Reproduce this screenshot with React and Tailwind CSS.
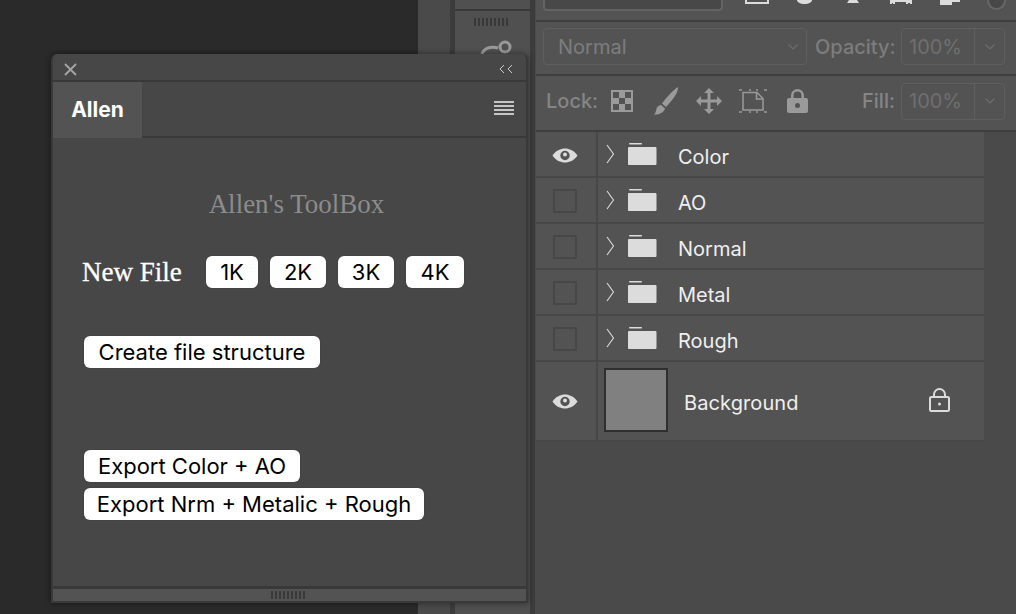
const sans = "font-['Inter','Liberation_Sans',sans-serif]";

function Chevron({ className = "" }) {
  return (
    <svg width="12" height="8" viewBox="0 0 12 8" className={className}>
      <path d="M1.5 1.5 6 6l4.500-4.500" fill="none" stroke="#6e6e6e" strokeWidth="1.200" />
    </svg>
  );
}

function Eye() {
  return (
    <svg width="26" height="15" viewBox="0 0 26 15">
      <path fillRule="evenodd" fill="#dcdcdc" d="M0.500 7.500C4 2.500 8.500 0.500 13 0.500S22 2.500 25.500 7.500C22 12.500 17.500 14.500 13 14.500S4 12.500 0.500 7.500ZM13 2.800a4.700 4.700 0 1 0 0 9.400a4.700 4.700 0 0 0 0-9.400Z" />
      <circle cx="13" cy="6.500" r="2" fill="#dcdcdc" />
    </svg>
  );
}

function Folder() {
  return (
    <svg width="29" height="22" viewBox="0 0 29 22">
      <rect x="1" y="0" width="13" height="1.500" rx="0.700" fill="#dcdcdc" />
      <path d="M1 4h26.500a1 1 0 0 1 1 1v16a1 1 0 0 1-1 1H1a1 1 0 0 1-1-1V5a1 1 0 0 1 1-1Z" fill="#dcdcdc" />
    </svg>
  );
}

function Disclosure() {
  return (
    <svg width="9" height="20" viewBox="0 0 9 20">
      <path d="M1 1l6.500 9L1 19" fill="none" stroke="#dcdcdc" strokeWidth="1.100" />
    </svg>
  );
}

function LayerRow({ name, visible }) {
  return (
    <div className="flex h-[46px] border-b-2 border-[#474747] bg-[#535353]">
      <div className="flex w-[62px] shrink-0 items-center justify-center border-r-2 border-[#474747] pr-[2px] pt-[2px]">
        {visible ? <Eye /> : <div className="h-[24px] w-[24px] rounded-[1px] border-2 border-[#474747]" />}
      </div>
      <div className="flex items-center pb-[1px] pl-[8px]">
        <Disclosure />
        <div className="ml-[13px]"><Folder /></div>
        <span className={`${sans} ml-[21px] mt-[6px] text-[20px] leading-none text-[#efefef]`}>{name}</span>
      </div>
    </div>
  );
}

function ValueField({ children }) {
  return (
    <div className="flex h-[37px] w-[104px] shrink-0 rounded-[4px] border border-[#5f5f5f]">
      <div className={`${sans} flex w-[73px] items-center border-r border-[#5f5f5f] pl-[7px] text-[20px] leading-none text-[#6f6f6f]`}>{children}</div>
      <div className="flex flex-1 items-center justify-center"><Chevron /></div>
    </div>
  );
}

function LockIcons() {
  return (
    <div className="ml-[13px] flex items-center gap-[19px]">
      <svg width="22" height="22" viewBox="0 0 22 22">
        <rect width="22" height="22" fill="#9a9a9a" />
        <rect x="2" y="2" width="6" height="6" fill="#535353" />
        <rect x="14" y="2" width="6" height="6" fill="#535353" />
        <rect x="8" y="8" width="6" height="6" fill="#535353" />
        <rect x="2" y="14" width="6" height="6" fill="#535353" />
        <rect x="14" y="14" width="6" height="6" fill="#535353" />
      </svg>
      <svg width="27" height="28" viewBox="0 0 27 28" fill="#9a9a9a">
        <path d="M26 0c.800 5-6 14-12 20l-4-3.500C15 10 21 3 26 0ZM9 18l4 3.500c-1 4-6 6.500-11.500 6 3-1.500 2-4 3.500-7 1-1.500 2.500-2.500 4-2.500Z" />
      </svg>
      <svg width="26" height="26" viewBox="0 0 26 26" fill="#9a9a9a" className="-ml-[2px]">
        <path d="M13 0l5 5h-3.500v6.500H21V8l5 5-5 5v-3.500h-6.500V21H18l-5 5-5-5h3.500v-6.500H5V18l-5-5 5-5v3.500h6.500V5H8Z" />
      </svg>
      <svg width="29" height="25" viewBox="0 0 29 25" fill="none" stroke="#9a9a9a" className="-ml-[2px]">
        <path d="M4 3.500h14l6 6v11.500H4Z" strokeWidth="1.500" />
        <path d="M17.500 3.500v6.500H24" strokeWidth="1.500" />
        <path d="M0 1h3M10 1h2M17 1h2M25 1h3M0 23h3M10 23h2M17 23h2M25 23h3" strokeWidth="1.500" />
      </svg>
      <svg width="21" height="24" viewBox="0 0 21 24" fill="#9a9a9a">
        <path fillRule="evenodd" d="M2 9h2V6.500a6.500 6.500 0 0 1 13 0V9h2a2 2 0 0 1 2 2v11a2 2 0 0 1-2 2H2a2 2 0 0 1-2-2V11a2 2 0 0 1 2-2Zm4.500 0h8V6.500a4 4 0 0 0-8 0ZM10.500 14a2.500 2.500 0 1 0 0 5a2.500 2.500 0 0 0 0-5Z" />
      </svg>
    </div>
  );
}

function WhiteButton({ children, className = "" }) {
  return (
    <button className={`${sans} flex h-[32px] items-center justify-center rounded-[6px] bg-white text-[22px] leading-none text-black shadow-[0_0_1px_#222] ${className}`}>
      {children}
    </button>
  );
}

function Grip({ className = "" }) {
  return (
    <div className={`flex gap-[2px] ${className}`}>
      {Array.from({ length: 9 }).map((_, i) => (
        <div key={i} className="h-[8px] w-[2px] bg-[#393939]" />
      ))}
    </div>
  );
}

function FloatingPanel() {
  return (
    <div className="absolute left-[51px] top-[54px] flex h-[549px] w-[477px] flex-col overflow-hidden rounded-t-[6px] border-2 border-t-0 border-[#393939] bg-[#474747] shadow-[0_0_6px_rgba(0,0,0,0.45)]">
      <div className="flex h-[28px] shrink-0 items-center justify-between border-b-2 border-[#393939] pl-[11px] pr-[13px] pt-[4px]">
        <svg width="13" height="13" viewBox="0 0 13 13">
          <path d="M1 1l11 11M12 1 1 12" stroke="#a5a5a5" strokeWidth="1.800" />
        </svg>
        <svg width="14" height="10" viewBox="0 0 14 10" fill="none" stroke="#c8c8c8" strokeWidth="1">
          <path d="M5 1 1 5l4 4M13 1 9 5l4 4" />
        </svg>
      </div>
      <div className="flex h-[56px] shrink-0">
        <div className={`${sans} flex w-[89px] items-center justify-center bg-[#535353] pb-[1px] text-[21px] font-bold leading-none text-white`}>
          Allen
        </div>
        <div className="flex flex-1 items-center justify-end border-b-2 border-[#393939] pb-[2px] pr-[12px]">
          <div className="flex flex-col gap-[2px]">
            <div className="h-[2px] w-[20px] bg-[#c5c5c5]" />
            <div className="h-[2px] w-[20px] bg-[#c5c5c5]" />
            <div className="h-[2px] w-[20px] bg-[#c5c5c5]" />
            <div className="h-[2px] w-[20px] bg-[#c5c5c5]" />
          </div>
        </div>
      </div>

      <div className="flex flex-1 flex-col">
        <h1 className="mt-[51px] pl-[14px] text-center font-['Liberation_Serif',serif] text-[27px] font-normal leading-[30px] text-[#8c8c8c]">
          Allen's ToolBox
        </h1>
        <div className="mt-[37px] flex items-center pl-[29px]">
          <span className="w-[124px] font-['Liberation_Serif',serif] text-[27px] leading-[32px] text-white [-webkit-text-stroke:0.3px_white]">New File</span>
          <div className="flex gap-[12px]">
            <WhiteButton className="w-[52px]">1K</WhiteButton>
            <WhiteButton className="w-[56px]">2K</WhiteButton>
            <WhiteButton className="w-[56px]">3K</WhiteButton>
            <WhiteButton className="w-[58px]">4K</WhiteButton>
          </div>
        </div>
        <WhiteButton className="ml-[31px] mt-[48px] w-[236px]">Create file structure</WhiteButton>
        <WhiteButton className="ml-[31px] mt-[82px] w-[216px]">Export Color + AO</WhiteButton>
        <WhiteButton className="ml-[31px] mt-[6px] w-[340px]">Export Nrm + Metalic + Rough</WhiteButton>
      </div>

      <div className="flex h-[15px] shrink-0 items-center justify-center border-t-[3px] border-[#393939] bg-[#535353]">
        <Grip className="ml-[-4px]" />
      </div>
    </div>
  );
}

function TopIcons() {
  return (
    <div className="flex flex-1 items-start overflow-hidden pl-[22px]">
      <svg width="215" height="6" viewBox="0 0 215 6" fill="#dcdcdc">
        <path fillRule="evenodd" d="M0 0h24v4H0Zm2 0v2h20V0Z" />
        <path d="M52 0h15c0 2-3 4-7.500 4S52 2 52 0Z" />
        <path d="M104 0h8l2 3h-12Z" />
        <path d="M145 0h22v4h-2V3h-2v1h-2V2h-11v2h-2V3h-1v1h-2Z" />
        <path d="M195 0h20v2h-8v3h-12Z" />
      </svg>
      <div className="ml-[27px] h-[10px] w-[19px] rounded-b-full border-2 border-t-0 border-[#666] bg-[#484848]" />
    </div>
  );
}

export default function App() {
  return (
    <div className="relative flex h-[614px] w-[1016px] overflow-hidden bg-[#2a2a2a]">
      <div className="w-[418px] shrink-0 bg-[#2a2a2a]" />
      <div className="flex w-[118px] shrink-0 bg-[#4a4a4a]">
        <div className="w-[37px] border-r-[5px] border-[#3c3c3c]" />
        <div className="relative w-[80px] border-r-[5px] border-[#3c3c3c] bg-[#505050]">
          <div className="h-[11px] border-b-2 border-[#393939]" />
          <Grip className="ml-[19px] mt-[7px]" />
          <svg width="32" height="16" viewBox="0 0 32 16" className="absolute left-[25px] top-[39px]" fill="none" stroke="#9a9a9a" strokeWidth="3">
            <path d="M2 15c2-6 9-8 16-6" />
            <circle cx="25" cy="8" r="5" />
          </svg>
        </div>
      </div>

      <div className="flex min-w-0 flex-1 flex-col bg-[#4a4a4a]">
        <div className="flex h-[22px] shrink-0 border-b-2 border-[#3e3e3e] bg-[#535353] pl-[7px]">
          <div className="h-[11px] w-[180px] rounded-b-[4px] border-2 border-t-0 border-[#636363] bg-[#484848]" />
          <TopIcons />
        </div>
        <div className="flex h-[54px] shrink-0 items-center border-b-2 border-[#3e3e3e] bg-[#535353] pb-[3px] pl-[7px] pr-[11px]">
          <div className="flex h-[37px] w-[264px] items-center justify-between rounded-[4px] border border-[#5f5f5f] pl-[14px] pr-[7px]">
            <span className={`${sans} text-[20px] leading-none text-[#7d7d7d]`}>Normal</span>
            <Chevron />
          </div>
          <span className={`${sans} ml-[8px] w-[86px] text-[20px] font-medium leading-none text-[#7d7d7d]`}>Opacity:</span>
          <ValueField>100%</ValueField>
        </div>
        <div className="flex h-[56px] shrink-0 items-center border-b-2 border-[#3e3e3e] bg-[#535353] pb-[4px] pl-[10px] pr-[11px]">
          <span className={`${sans} text-[20px] font-medium leading-none text-[#858585]`}>Lock:</span>
          <LockIcons />
          <span className={`${sans} ml-auto mr-[6px] text-[20px] font-medium leading-none text-[#858585]`}>Fill:</span>
          <ValueField>100%</ValueField>
        </div>
        <div className="w-[448px]">
          <LayerRow name="Color" visible />
          <LayerRow name="AO" />
          <LayerRow name="Normal" />
          <LayerRow name="Metal" />
          <LayerRow name="Rough" />
          <div className="flex h-[80px] border-b-2 border-[#474747] bg-[#535353]">
            <div className="flex w-[62px] shrink-0 items-center justify-center border-r-2 border-[#474747] pr-[2px]">
              <Eye />
            </div>
            <div className="ml-[6px] mt-[6px] h-[64px] w-[64px] border-2 border-[#2f2f2f] bg-[#808080]" />
            <span className={`${sans} ml-[16px] mt-[31px] text-[20px] leading-none tracking-[0.1px] text-[#efefef]`}>Background</span>
            <svg width="21" height="24" viewBox="0 0 21 24" fill="none" stroke="#dcdcdc" strokeWidth="2" className="ml-[130px] mt-[26px]">
              <rect x="1" y="9" width="19" height="14" rx="1.500" />
              <path d="M5 9V6.500a5.500 5.500 0 0 1 11 0V9" />
              <circle cx="10.500" cy="16" r="1.500" fill="#dcdcdc" stroke="none" />
            </svg>
          </div>
        </div>
      </div>

      <FloatingPanel />
    </div>
  );
}
